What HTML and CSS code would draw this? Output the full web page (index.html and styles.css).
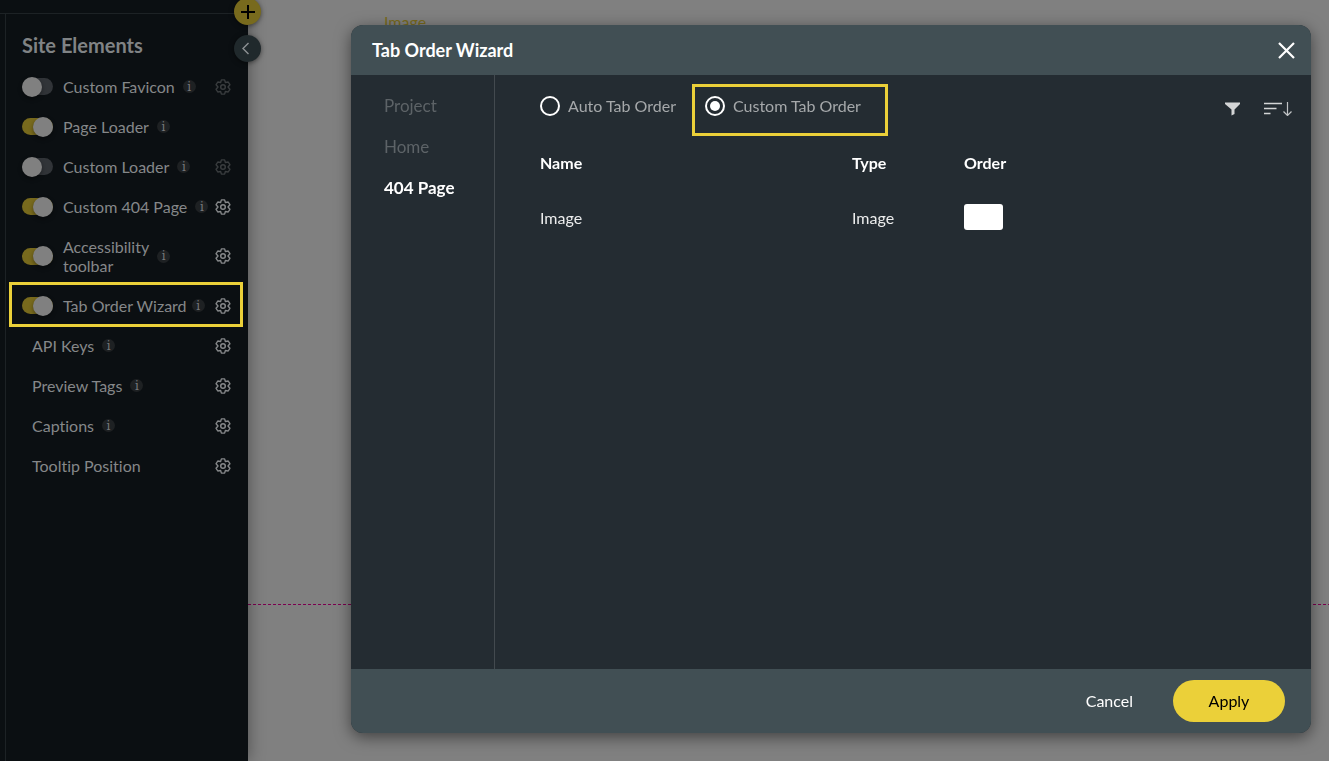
FILE: index.html
```html
<!DOCTYPE html>
<html lang="en">
<head>
<meta charset="utf-8">
<title>Tab Order Wizard</title>
<link rel="stylesheet" href="styles.css">
</head>
<body>
<svg class="defs" width="0" height="0" aria-hidden="true">
  <symbol id="gear" viewBox="0 0 16 16">
    <circle cx="8" cy="8" r="2.300" fill="none" stroke="currentColor" stroke-width="1.500"/>
    <path d="M6.400 .9h3.200L10.400 3.500l2.800-.5L14.900 5.700 13 8l1.900 2.300-1.700 2.700-2.800-.5L9.600 15.100H6.400L5.600 12.500l-2.800.5L1.100 10.300 3 8 1.100 5.700l1.700-2.700 2.800.5z" fill="none" stroke="currentColor" stroke-width="1.400" stroke-linejoin="round"/>
  </symbol>
</svg>
<div class="app">
  <aside class="sidebar">
    <div class="topbar"></div>
    <section class="panel">
      <h2 class="panel-title">Site Elements</h2>
      <ul class="rows">
        <li class="row"><input class="toggle" type="checkbox" id="favicon"><label for="favicon">Custom Favicon</label><span class="info">i</span><button class="gear off" aria-label="Custom Favicon settings"><svg><use href="#gear"/></svg></button></li>
        <li class="row"><input class="toggle" type="checkbox" id="loader" checked><label for="loader">Page Loader</label><span class="info">i</span></li>
        <li class="row"><input class="toggle" type="checkbox" id="cloader"><label for="cloader">Custom Loader</label><span class="info">i</span><button class="gear off" aria-label="Custom Loader settings"><svg><use href="#gear"/></svg></button></li>
        <li class="row"><input class="toggle" type="checkbox" id="p404" checked><label for="p404">Custom 404 Page</label><span class="info">i</span><button class="gear" aria-label="Custom 404 Page settings"><svg><use href="#gear"/></svg></button></li>
        <li class="row"><input class="toggle" type="checkbox" id="access" checked><label for="access">Accessibility<br>toolbar</label><span class="info">i</span><button class="gear" aria-label="Accessibility toolbar settings"><svg><use href="#gear"/></svg></button></li>
        <li class="row marked"><input class="toggle" type="checkbox" id="taborder" checked><label for="taborder">Tab Order Wizard</label><span class="info">i</span><button class="gear" aria-label="Tab Order Wizard settings"><svg><use href="#gear"/></svg></button></li>
        <li class="row plain"><span>API Keys</span><span class="info">i</span><button class="gear" aria-label="API Keys settings"><svg><use href="#gear"/></svg></button></li>
        <li class="row plain"><span>Preview Tags</span><span class="info">i</span><button class="gear" aria-label="Preview Tags settings"><svg><use href="#gear"/></svg></button></li>
        <li class="row plain"><span>Captions</span><span class="info">i</span><button class="gear" aria-label="Captions settings"><svg><use href="#gear"/></svg></button></li>
        <li class="row plain"><span>Tooltip Position</span><button class="gear" aria-label="Tooltip Position settings"><svg><use href="#gear"/></svg></button></li>
      </ul>
    </section>
    <button class="round add" aria-label="Add"><svg width="27" height="27" viewBox="0 0 27 27"><path d="M14 7v14M7 14h14" stroke="#000" stroke-width="2" fill="none"/></svg></button>
    <button class="round collapse" aria-label="Collapse"><svg width="27" height="27" viewBox="0 0 27 27"><path d="M14.500 8l-5.500 5.500 5.500 5.500" stroke="#8d9193" stroke-width="1.400" fill="none"/></svg></button>
  </aside>
  <main class="canvas">
    <span class="canvas-label">Image</span>
    <div class="fold"></div>
  </main>
</div>

<div class="modal" role="dialog" aria-labelledby="modal-title">
  <header class="modal-head">
    <h1 id="modal-title">Tab Order Wizard</h1>
    <button class="close" aria-label="Close"><svg width="17" height="17" viewBox="0 0 17 17"><path d="M1 1l15 15M16 1L1 16" stroke="#fff" stroke-width="2.200" fill="none"/></svg></button>
  </header>
  <div class="modal-body">
    <nav class="pages">
      <a href="#">Project</a>
      <a href="#">Home</a>
      <a href="#" class="current">404 Page</a>
    </nav>
    <section class="content">
      <div class="options">
        <label class="option"><input type="radio" name="order"><span>Auto Tab Order</span></label>
        <label class="option chosen"><input type="radio" name="order" checked><span>Custom Tab Order</span></label>
        <div class="tools">
          <button aria-label="Filter"><svg width="16" height="14" viewBox="0 0 16 14"><path d="M0 .5h15v1.500L9.500 7.500v4.500L6.500 13.500v-6L0 2z" fill="#d3d5d6"/></svg></button>
          <button aria-label="Sort"><svg width="28" height="14" viewBox="0 0 28 14"><path d="M0 1.500h18M0 6.500h12.500M0 11.500h6.500" stroke="#d3d5d6" stroke-width="1.500" fill="none"/><path d="M23.500 0v13M19.500 9.500l4 4 4-4" stroke="#c0c3c5" stroke-width="1.200" fill="none"/></svg></button>
        </div>
      </div>
      <table class="items">
        <thead><tr><th class="name">Name</th><th class="type">Type</th><th>Order</th></tr></thead>
        <tbody><tr><td>Image</td><td>Image</td><td><input class="order" type="text" aria-label="Order of Image"></td></tr></tbody>
      </table>
    </section>
  </div>
  <footer class="modal-foot">
    <button class="cancel">Cancel</button>
    <button class="apply">Apply</button>
  </footer>
</div>
</body>
</html>
```

FILE: styles.css
```css
* { box-sizing: border-box; }
body { margin: 0; background: #808080; font: 16px/19px Lato, "Open Sans", sans-serif; font-variant-ligatures: none; overflow: hidden; }
button { border: 0; padding: 0; background: none; font: inherit; color: inherit; cursor: pointer; }
.defs { position: absolute; }

.app { display: flex; height: 100vh; }
.sidebar { position: relative; z-index: 1; display: flex; flex-direction: column; width: 248px; flex: none; background: #0b0f12; color: #858789; box-shadow: 0 0 16px rgba(0, 0, 0, .4); }
.topbar { height: 14px; border-bottom: 1px solid #1d2225; }
.panel { flex: 1; margin-left: 5px; padding: 19px 17px 0 16px; border-left: 1px solid #1d2225; }
.panel-title { margin: 0 0 9px; font-size: 20px; line-height: 24px; font-weight: 700; color: #808385; }
.rows { list-style: none; margin: 0; padding: 0; }
.row { display: flex; align-items: center; padding: 11px 0 10px; }
.row label { margin-left: 10px; white-space: nowrap; }
.row.plain { padding-left: 10px; }
.row.marked { position: relative; }
.row.marked .info { margin-left: 5px; }
.row.marked::after { content: ""; position: absolute; inset: -3px -12px -2px -13px; border: 3px solid #ebd039; pointer-events: none; }
.toggle { appearance: none; flex: none; display: flex; align-items: center; width: 31px; height: 17px; margin: 0; border-radius: 9px; background: #313438; }
.toggle::before { content: ""; width: 20px; height: 20px; flex: none; border-radius: 50%; background: #808080; box-shadow: 0 2px 4px rgba(0, 0, 0, .4); }
.toggle:checked { background: #786a1d; justify-content: flex-end; }
.info { display: grid; place-items: center; flex: none; width: 13px; height: 13px; margin-left: 8px; border-radius: 50%; background: #1e2123; color: #77797b; font: 12px/12px "DejaVu Serif", serif; }
.gear { display: flex; margin-left: auto; color: #858789; }
.gear.off { color: #393c3e; }
.gear svg { width: 16px; height: 16px; }
.round { position: absolute; right: -13px; width: 27px; height: 27px; border-radius: 50%; box-shadow: 0 1px 5px rgba(0, 0, 0, .5); }
.round svg { display: block; }
.add { top: -2px; background: #786a1d; }
.collapse { top: 35px; background: #20292c; }

.canvas { flex: 1; display: flex; flex-direction: column; padding-top: 11px; }
.canvas-label { padding-left: 136px; line-height: 22px; color: #786a1d; }
.fold { height: 1px; margin-top: 571px; background: repeating-linear-gradient(90deg, #7d0050 0 3px, transparent 3px 5px); }

.modal { position: fixed; z-index: 2; inset: 25px 18px 28px 351px; display: flex; flex-direction: column; overflow: hidden; border-radius: 12px; background: #242c32; color: #fff; box-shadow: 0 4px 16px rgba(0, 0, 0, .5); }
.modal-head { display: flex; align-items: center; justify-content: space-between; height: 50px; padding: 0 16px 0 21px; background: #414f54; }
.modal-head h1 { margin: 0; font-size: 18px; line-height: 22px; font-weight: 700; }
.close svg { display: block; }
.modal-body { flex: 1; display: flex; }
.pages { display: flex; flex-direction: column; gap: 19px; width: 144px; padding: 20px 0 0 33px; border-right: 1px solid #434a4f; font-size: 17px; line-height: 22px; }
.pages a { color: #5d6367; text-decoration: none; }
.pages .current { color: #fff; font-weight: 700; }
.content { flex: 1; padding: 9px 19px 0 45px; }
.options { display: flex; align-items: flex-start; }
.option { display: flex; align-items: center; gap: 8px; height: 44px; color: #a5a8aa; }
.option span { padding-bottom: 2px; }
.option.chosen { height: 52px; margin-left: 16px; padding: 0 24px 8px 10px; border: 3px solid #ebd039; }
.option input { appearance: none; display: grid; place-items: center; width: 20px; height: 20px; margin: 0; border: 2px solid #fff; border-radius: 50%; }
.option input:checked::before { content: ""; width: 10px; height: 10px; border-radius: 50%; background: #fff; }
.tools { display: flex; align-items: center; gap: 23px; margin: 18px 0 0 auto; }
.tools button, .tools svg { display: block; }
.items { margin-top: 16px; border-collapse: collapse; text-align: left; }
.items th, .items td { padding: 0; font-size: 16px; }
.items th { height: 20px; font-weight: 700; }
.items td { height: 90px; color: #eceded; }
.items .name { width: 312px; }
.items .type { width: 112px; }
.order { display: block; width: 39px; height: 26px; padding: 0 4px; border: 0; border-radius: 3px; background: #fff; font: inherit; }
.modal-foot { display: flex; align-items: center; justify-content: flex-end; gap: 40px; height: 64px; padding-right: 26px; background: #414f54; }
.modal-foot button { height: 42px; padding-bottom: 2px; }
.apply { width: 112px; border-radius: 21px; background: #ebd039; color: #000; }
```
